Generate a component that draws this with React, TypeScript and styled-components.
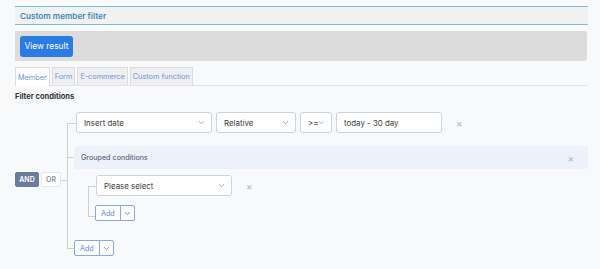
import React from "react";
import styled, { createGlobalStyle, css } from "styled-components";

const Global = createGlobalStyle`
  html, body { margin: 0; padding: 0; background: #f8f9fb; }
  body { font-family: Inter, "Open Sans", sans-serif; color: #333; }
  * { box-sizing: border-box; }
`;

const Page = styled.div`
  padding: 6px 12px 0 15px;
  width: 600px;
`;

const Header = styled.div`
  height: 19px;
  background: #f1f1f1;
  border-top: 1.5px solid #74bde3;
  border-bottom: 1.5px solid #74bde3;
  display: flex;
  align-items: center;
  padding-left: 5px;
  font-size: 8.2px;
  font-weight: 600;
  color: #3f88b8;
`;

const Toolbar = styled.div`
  margin-top: 6px;
  margin-right: 1px;
  height: 30px;
  background: #dcdcdc;
  border-radius: 0 3px 3px 0;
  display: flex;
  align-items: center;
  padding-left: 5px;
`;

const PrimaryButton = styled.button`
  height: 21px;
  width: 53px;
  border: none;
  border-radius: 3px;
  background: #2a7be4;
  color: #fff;
  font-family: inherit;
  font-size: 8.4px;
  padding: 0;
`;

const Tabs = styled.div`
  margin-top: 6px;
  display: flex;
  gap: 2px;
  border-bottom: 1px solid #e3e3e6;
  height: 19px;
`;

const Tab = styled.div<{ $active?: boolean }>`
  height: 18px;
  padding: 0 2px;
  display: flex;
  align-items: center;
  font-size: 7.3px;
  color: #6b95d6;
  border: 1px solid #dcdcdc;
  border-bottom: none;
  background: #efeff1;
  ${(p) =>
    p.$active &&
    css`
      background: #fff;
      height: 19px;
    `}
`;

const SectionTitle = styled.div`
  margin-top: 6px;
  font-size: 7.5px;
  font-weight: 700;
  color: #333;
`;

const Tree = styled.div`
  display: flex;
  align-items: center;
  margin-top: 11px;
`;

const Logic = styled.div`
  display: flex;
  gap: 2px;
  align-items: center;
  position: relative;
  padding-right: 6px;
  margin-bottom: 9px;
  &::after {
    content: "";
    position: absolute;
    right: 0;
    top: 50%;
    width: 6px;
    border-top: 1px solid #cfcfcf;
  }
`;

const LogicButton = styled.div<{ $active?: boolean; $w: number }>`
  height: 15px;
  width: ${(p) => p.$w}px;
  display: flex;
  align-items: center;
  justify-content: center;
  border-radius: 2px;
  font-size: 7px;
  font-weight: 600;
  border: 1px solid ${(p) => (p.$active ? "#6a7c9a" : "#e4e6ea")};
  background: ${(p) => (p.$active ? "#6a7c9a" : "#fff")};
  color: ${(p) => (p.$active ? "#fff" : "#8a8f98")};
`;

const Children = styled.div`
  flex: 1;
  display: flex;
  flex-direction: column;
`;

const Item = styled.div<{ $pad?: number; $mt?: number }>`
  position: relative;
  padding-left: ${(p) => p.$pad ?? 7}px;
  margin-top: ${(p) => p.$mt ?? 0}px;
  &::before {
    content: "";
    position: absolute;
    left: 0;
    top: var(--cy, 50%);
    width: ${(p) => p.$pad ?? 7}px;
    border-top: 1px solid #cfcfcf;
  }
  &::after {
    content: "";
    position: absolute;
    left: 0;
    border-left: 1px solid #cfcfcf;
  }
  &:first-child::after {
    top: var(--cy, 50%);
    bottom: 0;
  }
  &:last-child::after {
    top: ${(p) => -(p.$mt ?? 0)}px;
    height: calc(var(--cy, 50%) + ${(p) => p.$mt ?? 0}px);
  }
  &:not(:first-child):not(:last-child)::after {
    top: ${(p) => -(p.$mt ?? 0)}px;
    bottom: 0;
  }
`;

const Row = styled.div`
  display: flex;
  align-items: center;
  gap: 4px;
`;

const SelectBox = styled.div<{ $w: number }>`
  width: ${(p) => p.$w}px;
  height: 21px;
  border: 1px solid #c9d3e4;
  border-radius: 3px;
  background: #fff;
  display: flex;
  align-items: center;
  justify-content: space-between;
  padding: 0 6px 0 7px;
  font-size: 7.9px;
  color: #3a3a3a;
`;

const Chevron = () => (
  <svg width="7" height="5" viewBox="0 0 7 5">
    <path d="M1 1.2 L3.5 3.6 L6 1.2" fill="none" stroke="#9aa3b2" strokeWidth="0.9" />
  </svg>
);

const Close = styled.span<{ $ml?: number }>`
  margin-left: ${(p) => p.$ml ?? 10}px;
  font-size: 10px;
  color: #aab3c2;
  line-height: 1;
`;

const Group = styled.div`
  display: flex;
  flex-direction: column;
`;

const GroupHeader = styled.div`
  height: 23px;
  background: #edf1f9;
  border-radius: 3px;
  display: flex;
  align-items: center;
  justify-content: space-between;
  padding: 0 14px 0 7px;
  font-size: 7.2px;
  color: #4a4f58;
`;

const GroupBody = styled.div`
  display: flex;
  flex-direction: column;
  padding-left: 14px;
`;

const AddSplit = styled.div`
  display: flex;
  width: fit-content;
  height: 16px;
  border: 1px solid #86a9e6;
  border-radius: 2px;
  background: #fff;
  color: #5d8ad6;
  font-size: 7.2px;
`;

const AddMain = styled.span`
  display: flex;
  align-items: center;
  padding: 0 5px;
  border-right: 1px solid #86a9e6;
`;

const AddArrow = styled.span`
  display: flex;
  align-items: center;
  padding: 0 3px;
`;

const BlueChevron = () => (
  <svg width="7" height="5" viewBox="0 0 7 5">
    <path d="M1 1.2 L3.5 3.6 L6 1.2" fill="none" stroke="#5d8ad6" strokeWidth="0.9" />
  </svg>
);

const AddButton = () => (
  <AddSplit>
    <AddMain>Add</AddMain>
    <AddArrow>
      <BlueChevron />
    </AddArrow>
  </AddSplit>
);

export default function App() {
  return (
    <Page>
      <Global />
      <Header>Custom member filter</Header>
      <Toolbar>
        <PrimaryButton>View result</PrimaryButton>
      </Toolbar>
      <Tabs>
        <Tab $active>Member</Tab>
        <Tab>Form</Tab>
        <Tab>E-commerce</Tab>
        <Tab>Custom function</Tab>
      </Tabs>
      <SectionTitle>Filter conditions</SectionTitle>
      <Tree>
        <Logic>
          <LogicButton $active $w={24}>AND</LogicButton>
          <LogicButton $w={20}>OR</LogicButton>
        </Logic>
        <Children>
          <Item $pad={9}>
            <Row>
              <SelectBox $w={136}>
                Insert date <Chevron />
              </SelectBox>
              <SelectBox $w={80}>
                Relative <Chevron />
              </SelectBox>
              <SelectBox $w={32}>
                &gt;= <Chevron />
              </SelectBox>
              <SelectBox $w={106}>today - 30 day</SelectBox>
              <Close $ml={10}>×</Close>
            </Row>
          </Item>
          <Item $mt={13} style={{ ["--cy" as string]: "11px" }}>
            <Group>
              <GroupHeader>
                Grouped conditions <Close $ml={0}>×</Close>
              </GroupHeader>
              <GroupBody>
                <Item $pad={8} $mt={6}>
                  <Row>
                    <SelectBox $w={136}>
                      Please select <Chevron />
                    </SelectBox>
                    <Close $ml={10}>×</Close>
                  </Row>
                </Item>
                <Item $pad={7} $mt={9}>
                  <AddButton />
                </Item>
              </GroupBody>
            </Group>
          </Item>
          <Item $mt={19}>
            <AddButton />
          </Item>
        </Children>
      </Tree>
    </Page>
  );
}
